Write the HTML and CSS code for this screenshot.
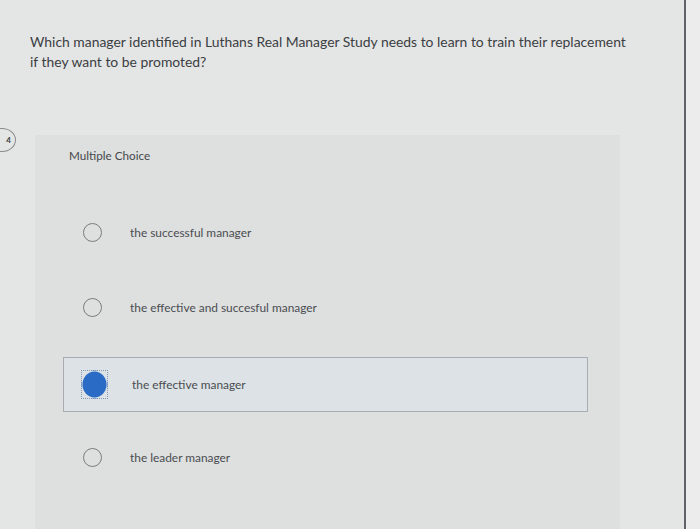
FILE: index.html
```html
<!DOCTYPE html>
<html lang="en">

<head>
    <meta charset="utf-8">
    <title>Multiple Choice</title>
    <link rel="stylesheet" href="styles.css">
</head>

<body>

    <div class="screen">
        <span class="badge">4</span>

        <div class="question">
            Which manager identified in Luthans Real Manager Study needs to learn to train their replacement<br>
            if they want to be promoted?
        </div>

        <div class="card">
            <div class="card-title">Multiple Choice</div>

            <div class="choices">
                <label class="choice">
                    <span class="radio"></span>
                    <span class="choice-text">the successful manager</span>
                </label>
                <label class="choice">
                    <span class="radio"></span>
                    <span class="choice-text">the effective and succesful manager</span>
                </label>
                <label class="choice selected">
                    <span class="radio"></span>
                    <span class="choice-text">the effective manager</span>
                </label>
                <label class="choice">
                    <span class="radio"></span>
                    <span class="choice-text">the leader manager</span>
                </label>
            </div>
        </div>
    </div>

</body>

</html>
```

FILE: styles.css
```css
body {
    margin: 0;
    background-color: #ececec;
    font-family: Lato, "Open Sans", sans-serif;
    color: #3b3e42;
}

.screen {
    position: relative;
    width: 686px;
    height: 529px;
    box-sizing: border-box;
    padding: 32px 0 0 30px;
    background-color: #e4e5e5;
    border-right: 2px solid #5f6266;
    overflow: hidden;
}

.badge {
    position: absolute;
    left: -12px;
    top: 128px;
    width: 22px;
    height: 22px;
    border: 1px solid #8a8c8e;
    border-radius: 50%;
    font-size: 8px;
    font-weight: 700;
    line-height: 22px;
    text-align: right;
    padding-right: 4px;
    box-sizing: content-box;
}

.question {
    font-size: 13.9px;
    line-height: 20px;
    white-space: nowrap;
}

.card {
    margin: 63px 0 0 5px;
    width: 585px;
    height: 400px;
    padding: 12px 32px 0 28px;
    box-sizing: border-box;
    background-color: #dedfdf;
}

.card-title {
    padding-left: 6px;
    font-size: 11.7px;
    line-height: 16px;
    color: #45484c;
}

.choices {
    display: flex;
    flex-direction: column;
    gap: 20px;
    margin-top: 42px;
}

.choice {
    display: flex;
    align-items: center;
    height: 55px;
    box-sizing: border-box;
    padding-left: 19px;
    border: 1px solid transparent;
}

.choice.selected {
    margin-top: 2px;
    margin-bottom: -2px;
    padding-left: 17px;
    background-color: #dce2e5;
    border-color: #a7adb1;
}

.radio {
    width: 19px;
    height: 19px;
    margin-right: 28px;
    box-sizing: border-box;
    border: 1.5px solid #7a7c7e;
    border-radius: 50%;
}

.choice.selected .radio {
    width: 27px;
    height: 29px;
    margin-right: 24px;
    border: 1px dotted #7f98b5;
    border-radius: 0;
    background: radial-gradient(ellipse closest-side, #2a6bc6 92%, transparent 100%);
}

.choice-text {
    font-size: 11.9px;
    color: #4a4d51;
}
```
